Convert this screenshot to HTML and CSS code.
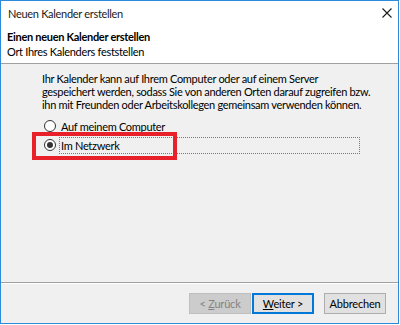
FILE: index.html
```html
<!DOCTYPE html>
<html lang="de">
<head>
    <meta charset="UTF-8">
    <title>Neuen Kalender erstellen</title>
    <link rel="stylesheet" href="styles.css">
</head>
<body>
    <div class="window">
        <div class="titlebar">
            <span class="title">Neuen Kalender erstellen</span>
            <svg class="close" width="10" height="10" viewBox="0 0 10 10">
                <path d="M0.5 0.5 L9.5 9.5 M9.5 0.5 L0.5 9.5" stroke="#1a1a1a" stroke-width="1.1" fill="none"/>
            </svg>
        </div>

        <!-- Wizard header -->
        <div class="wizard-header">
            <div class="wizard-title">Einen neuen Kalender erstellen</div>
            <div class="wizard-sub">Ort Ihres Kalenders feststellen</div>
        </div>

        <div class="wizard-body">
            <p class="intro">Ihr Kalender kann auf Ihrem Computer oder auf einem Server<br>gespeichert werden, sodass Sie von anderen Orten darauf zugreifen bzw.<br>ihn mit Freunden oder Arbeitskollegen gemeinsam verwenden können.</p>

            <div class="option">
                <span class="radio"></span>
                <span class="label">Auf meinem Computer</span>
            </div>
            <div class="option">
                <span class="radio checked"></span>
                <span class="label focused">Im Netzwerk</span>
                <div class="highlight"></div>
            </div>
        </div>

        <div class="wizard-footer">
            <button class="btn disabled">&lt; <u>Z</u>urück</button>
            <button class="btn default"><u>W</u>eiter &gt;</button>
            <button class="btn cancel">Abbrechen</button>
        </div>
    </div>
</body>
</html>
```

FILE: styles.css
```css
* {
    box-sizing: border-box;
    margin: 0;
    padding: 0;
}

body {
    background-color: #fff;
    font-family: Lato, "Noto Sans", sans-serif;
    font-size: 11px;
    letter-spacing: -0.3px;
    color: #000;
}

.window {
    width: 399px;
    height: 324px;
    border: 1px solid #2b8ad9;
    background-color: #f0f0f0;
    display: flex;
    flex-direction: column;
}

.titlebar {
    height: 24px;
    background-color: #fff;
    display: flex;
    align-items: center;
    justify-content: space-between;
    padding: 0 6px 0 7px;
    color: #1a1a1a;
}

.close {
    margin-top: -1px;
}

.wizard-header {
    background-color: #fff;
    height: 39px;
    padding: 4px 6px 0;
    border-bottom: 1px solid #a0a0a0;
}

.wizard-title {
    font-weight: bold;
    line-height: 15px;
}

.wizard-sub {
    line-height: 15px;
}

.wizard-body {
    flex: 1;
    padding: 8px 0 0 41px;
    border-bottom: 1px solid #a0a0a0;
}

.intro {
    line-height: 13px;
    margin-bottom: 6px;
    white-space: nowrap;
}

.option {
    position: relative;
    display: flex;
    align-items: center;
    height: 18px;
    margin-left: 2px;
    margin-bottom: 1px;
    white-space: nowrap;
}

.radio {
    width: 12px;
    height: 12px;
    border: 1px solid #333;
    border-radius: 50%;
    background-color: #fff;
    display: flex;
    align-items: center;
    justify-content: center;
    margin-right: 3px;
    flex-shrink: 0;
}

.radio.checked::after {
    content: "";
    width: 6px;
    height: 6px;
    border-radius: 50%;
    background-color: #333;
}

.label {
    line-height: 15px;
    padding-left: 2px;
}

.label.focused {
    width: 301px;
    border: 1px dotted #7a7a7a;
    padding-left: 1px;
}

/* red marker round the selected option */
.highlight {
    position: absolute;
    left: -12px;
    top: -4px;
    width: 145px;
    height: 28px;
    border: 4px solid #e8202a;
}

.wizard-footer {
    height: 40px;
    border-top: 1px solid #fff;
    display: flex;
    align-items: center;
    justify-content: flex-end;
    padding: 0 12px 0 0;
}

.btn {
    width: 62px;
    height: 21px;
    font-family: inherit;
    font-size: 11px;
    letter-spacing: -0.2px;
    background-color: #e1e1e1;
    border: 1px solid #adadad;
    color: #000;
}

.btn.disabled {
    background-color: #cccccc;
    border-color: #bfbfbf;
    color: #838383;
    margin-right: 1px;
}

.btn.default {
    border: 2px solid #0078d7;
    margin-right: 10px;
}
```
